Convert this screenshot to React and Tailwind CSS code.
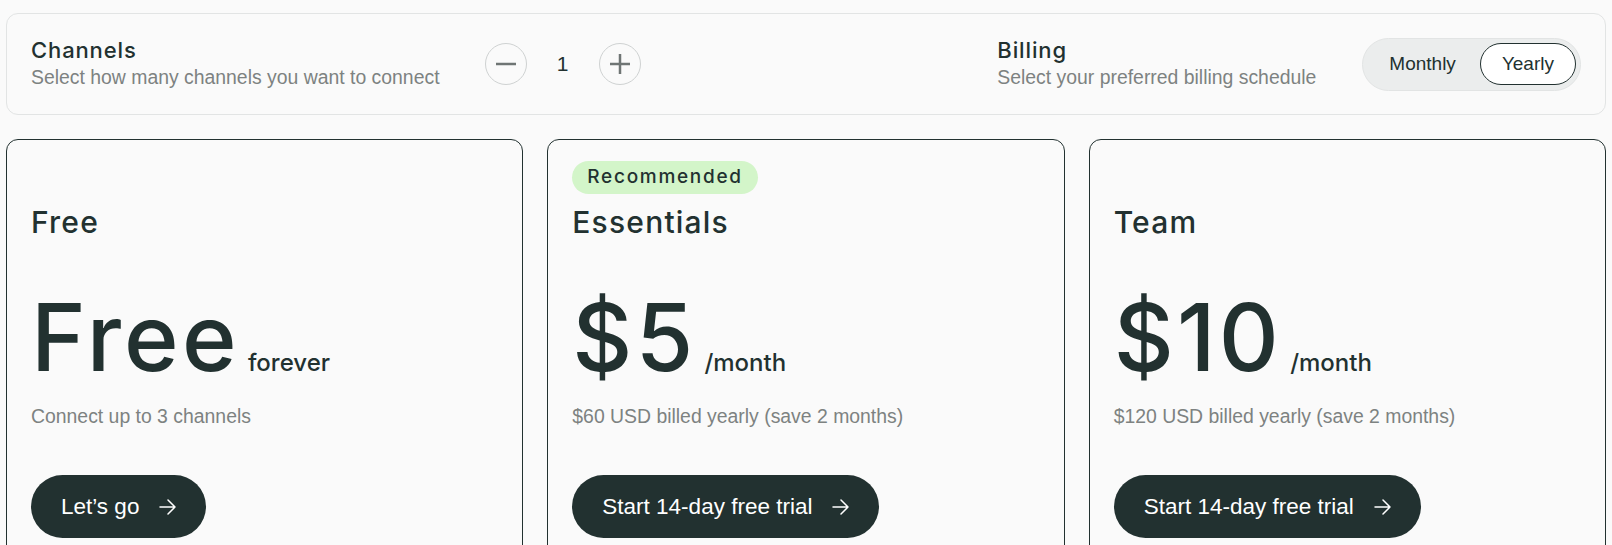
import { useState } from "react";

const HEAD = "font-['Inter','Noto_Sans',sans-serif]";
const BODY = "font-['Liberation_Sans','Arial',sans-serif]";

const PLANS = [
  {
    id: "free",
    name: "Free",
    price: "Free",
    unit: "forever",
    note: "Connect up to 3 channels",
    cta: "Let\u2019s go",
  },
  {
    id: "essentials",
    name: "Essentials",
    badge: "Recommended",
    price: "$5",
    unit: "/month",
    note: "$60 USD billed yearly (save 2 months)",
    cta: "Start 14-day free trial",
  },
  {
    id: "team",
    name: "Team",
    price: "$10",
    unit: "/month",
    note: "$120 USD billed yearly (save 2 months)",
    cta: "Start 14-day free trial",
  },
];

export default function App() {
  const [channels, setChannels] = useState(1);
  const [billing, setBilling] = useState("yearly");

  return (
    <div className="min-h-screen bg-[#fafafa] px-[6px] pt-[13px] text-[#223130]">
      {/* SETTINGS BAR */}
      <div className="flex h-[102px] items-center justify-between rounded-xl border border-[#e2e4e4] px-6">
        <div className="flex items-center gap-[45px]">
          <Heading
            title="Channels"
            subtitle="Select how many channels you want to connect"
          />
          <div className="flex items-center gap-[30px]">
            <RoundButton onClick={() => setChannels((c) => Math.max(1, c - 1))}>
              <path d="M1 11h20" />
            </RoundButton>
            <span className={`${BODY} w-[12px] text-center text-[21px]`}>
              {channels}
            </span>
            <RoundButton onClick={() => setChannels((c) => c + 1)}>
              <path d="M1 11h20M11 1v20" />
            </RoundButton>
          </div>
        </div>

        <div className="flex items-center gap-[46px]">
          <Heading title="Billing" subtitle="Select your preferred billing schedule" />
          <div className="flex h-[53px] items-center gap-[2px] rounded-full border border-[#e2e4e4] bg-[#ebeded] px-[4px]">
            <Toggle active={billing === "monthly"} onClick={() => setBilling("monthly")}>
              Monthly
            </Toggle>
            <Toggle active={billing === "yearly"} onClick={() => setBilling("yearly")}>
              Yearly
            </Toggle>
          </div>
        </div>
      </div>

      {/* PLANS */}
      <div className="mt-6 grid grid-cols-3 gap-6">
        {PLANS.map((plan) => (
          <div
            key={plan.id}
            className="flex h-[420px] flex-col items-start rounded-xl border border-[#223130] px-6 pt-[21px]"
          >
            <div className="h-[33px]">
              {plan.badge && (
                <span
                  className={`${HEAD} flex h-[33px] items-center rounded-full bg-[#d3f5c9] px-[15px] text-[19px] font-medium tracking-[0.09em]`}
                >
                  {plan.badge}
                </span>
              )}
            </div>
            <h2
              className={`${HEAD} mt-[10px] text-[30px] font-medium leading-[36px] tracking-[0.04em]`}
            >
              {plan.name}
            </h2>
            <div className={`${HEAD} mt-[51px] flex items-baseline gap-[8px]`}>
              <span className="text-[93px] font-medium leading-[92px] tracking-[0.035em]">
                {plan.price}
              </span>
              <span className="text-[24px] font-medium">{plan.unit}</span>
            </div>
            <p className={`${BODY} mt-[21px] text-[19.4px] leading-[24px] text-[#7d8281]`}>
              {plan.note}
            </p>
            <button
              className={`${BODY} mt-[47px] flex h-[63px] items-center gap-5 rounded-full bg-[#223130] px-[30px] text-[22.5px] text-white`}
            >
              {plan.cta}
              <svg
                width="17"
                height="16"
                viewBox="0 0 17 16"
                fill="none"
                stroke="currentColor"
                strokeWidth="1.5"
                strokeLinecap="round"
                strokeLinejoin="round"
              >
                <path d="M1 8h15M9 1l7 7-7 7" />
              </svg>
            </button>
          </div>
        ))}
      </div>
    </div>
  );
}

/* ---------- UI ---------- */

function Heading({ title, subtitle }) {
  return (
    <div className="flex flex-col">
      <span
        className={`${HEAD} text-[22px] font-medium leading-[27px] tracking-[0.04em]`}
      >
        {title}
      </span>
      <span className={`${BODY} text-[19.4px] leading-[27px] text-[#7d8281]`}>
        {subtitle}
      </span>
    </div>
  );
}

function RoundButton({ children, ...props }) {
  return (
    <button
      {...props}
      className="flex h-[42px] w-[42px] items-center justify-center rounded-full border border-[#cfd2d2] text-[#6f7574]"
    >
      <svg
        width="22"
        height="22"
        viewBox="0 0 22 22"
        fill="none"
        stroke="currentColor"
        strokeWidth="2.5"
      >
        {children}
      </svg>
    </button>
  );
}

function Toggle({ active, children, ...props }) {
  return (
    <button
      {...props}
      className={`${BODY} flex h-[42px] items-center rounded-full px-[21px] text-[19px] ${
        active ? "border border-[#223130] bg-white" : "border border-transparent"
      }`}
    >
      {children}
    </button>
  );
}
